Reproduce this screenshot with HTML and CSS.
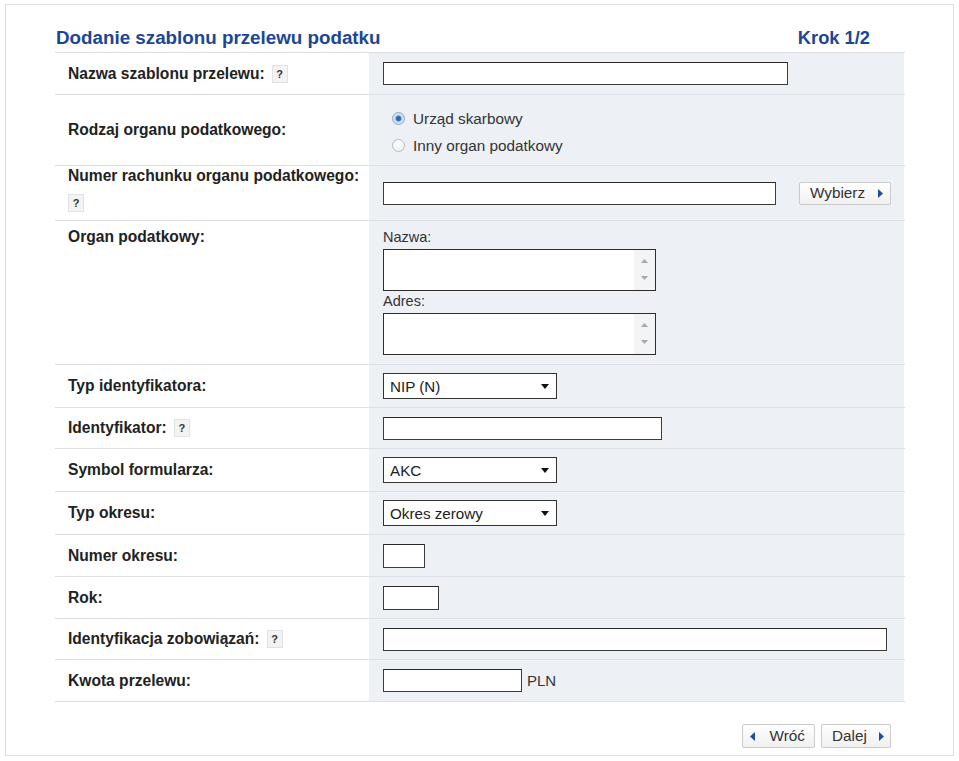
FILE: index.html
```html
<!DOCTYPE html>
<html lang="pl">
<head>
<meta charset="utf-8">
<title>Dodanie szablonu przelewu podatku</title>
<link rel="stylesheet" href="styles.css">
</head>
<body>
<div class="panel">
  <div class="head">
    <h1 class="title">Dodanie szablonu przelewu podatku</h1>
    <span class="step">Krok 1/2</span>
  </div>

  <div class="form">
    <div class="row h41">
      <div class="lbl">Nazwa szablonu przelewu:<span class="help">?</span></div>
      <div class="val"><input class="txt w405" type="text"></div>
    </div>

    <div class="row h70">
      <div class="lbl">Rodzaj organu podatkowego:</div>
      <div class="val radios">
        <label class="radio"><span class="dot on"></span>Urząd skarbowy</label>
        <label class="radio"><span class="dot"></span>Inny organ podatkowy</label>
      </div>
    </div>

    <div class="row h54">
      <div class="lbl col">Numer rachunku organu podatkowego:<span class="help down">?</span></div>
      <div class="val"><input class="txt w393" type="text">
        <button class="btn pick" type="button">Wybierz<svg width="5" height="9" viewBox="0 0 5 9"><path d="M0 0L5 4.5L0 9Z" fill="#1d4f9f"/></svg></button>
      </div>
    </div>

    <div class="row h143">
      <div class="lbl top">Organ podatkowy:</div>
      <div class="val stack">
        <div class="sub">Nazwa:</div>
        <div class="tbox">
          <textarea class="ta"></textarea>
          <div class="sb"><svg width="7" height="4" viewBox="0 0 7 4"><path d="M0 4L3.5 0L7 4Z" fill="#a8a8a8"/></svg><svg width="7" height="4" viewBox="0 0 7 4"><path d="M0 0L3.5 4L7 0Z" fill="#a8a8a8"/></svg></div>
        </div>
        <div class="sub">Adres:</div>
        <div class="tbox">
          <textarea class="ta"></textarea>
          <div class="sb"><svg width="7" height="4" viewBox="0 0 7 4"><path d="M0 4L3.5 0L7 4Z" fill="#a8a8a8"/></svg><svg width="7" height="4" viewBox="0 0 7 4"><path d="M0 0L3.5 4L7 0Z" fill="#a8a8a8"/></svg></div>
        </div>
      </div>
    </div>

    <div class="row h42">
      <div class="lbl">Typ identyfikatora:</div>
      <div class="val"><div class="sel"><select><option>NIP (N)</option></select><svg class="arr" width="8" height="5" viewBox="0 0 8 5"><path d="M0 0L8 0L4 5Z" fill="#111"/></svg></div></div>
    </div>

    <div class="row h40">
      <div class="lbl">Identyfikator:<span class="help">?</span></div>
      <div class="val"><input class="txt w279" type="text"></div>
    </div>

    <div class="row h42">
      <div class="lbl">Symbol formularza:</div>
      <div class="val"><div class="sel"><select><option>AKC</option></select><svg class="arr" width="8" height="5" viewBox="0 0 8 5"><path d="M0 0L8 0L4 5Z" fill="#111"/></svg></div></div>
    </div>

    <div class="row h42">
      <div class="lbl">Typ okresu:</div>
      <div class="val"><div class="sel"><select><option>Okres zerowy</option></select><svg class="arr" width="8" height="5" viewBox="0 0 8 5"><path d="M0 0L8 0L4 5Z" fill="#111"/></svg></div></div>
    </div>

    <div class="row h41">
      <div class="lbl">Numer okresu:</div>
      <div class="val"><input class="txt w42 tall" type="text"></div>
    </div>

    <div class="row h41">
      <div class="lbl">Rok:</div>
      <div class="val"><input class="txt w56 tall" type="text"></div>
    </div>

    <div class="row h40">
      <div class="lbl">Identyfikacja zobowiązań:<span class="help">?</span></div>
      <div class="val"><input class="txt w504" type="text"></div>
    </div>

    <div class="row h41">
      <div class="lbl">Kwota przelewu:</div>
      <div class="val"><input class="txt w139" type="text"><span class="cur">PLN</span></div>
    </div>
  </div>

  <div class="foot">
    <button class="btn back" type="button"><svg width="5" height="9" viewBox="0 0 5 9"><path d="M5 0L0 4.5L5 9Z" fill="#1d4f9f"/></svg>Wróć</button>
    <button class="btn next" type="button">Dalej<svg width="5" height="9" viewBox="0 0 5 9"><path d="M0 0L5 4.5L0 9Z" fill="#1d4f9f"/></svg></button>
  </div>
</div>
</body>
</html>
```

FILE: styles.css
```css
* { box-sizing: border-box; }

body {
  margin: 0;
  padding: 4px 0 0 5px;
  background: #fff;
  font-family: "Liberation Sans", Arial, sans-serif;
  color: #333;
}

.panel {
  width: 949px;
  height: 752px;
  border: 1px solid #dedede;
  padding: 22px 48px 0 49px;
}

.head {
  display: flex;
  justify-content: space-between;
  align-items: baseline;
  padding: 0 35px 3px 1px;
  border-bottom: 1px solid #dcdfe3;
}

.title {
  margin: 0;
  font-size: 18.8px;
  line-height: 22px;
  font-weight: bold;
  color: #1c4695;
}

.step {
  font-size: 18.3px;
  line-height: 22px;
  font-weight: bold;
  color: #1c4695;
}

.row {
  display: grid;
  grid-template-columns: 314px 535px;
  border-bottom: 1px solid #dcdfe3;
}

.h40 { height: 41px; }
.h41 { height: 42px; }
.h42 { height: 43px; }
.h54 { height: 55px; }
.h70 { height: 71px; }
.h143 { height: 144px; }

.lbl {
  display: flex;
  align-items: center;
  padding-left: 13px;
  font-size: 15.6px;
  font-weight: bold;
  color: #222;
}

.lbl.col {
  flex-direction: column;
  align-items: flex-start;
  justify-content: flex-start;
  line-height: 20px;
  padding-top: 0;
}

.lbl.top {
  align-items: flex-start;
  padding-top: 6px;
  line-height: 20px;
}

.help {
  display: inline-flex;
  align-items: center;
  justify-content: center;
  width: 16px;
  height: 18px;
  margin-left: 7px;
  background: #f3f3f3;
  border: 1px solid #e2e2e2;
  font-size: 11px;
  font-weight: bold;
  color: #333;
}

.help.down {
  margin: 8px 0 0 0;
}

.val {
  display: flex;
  align-items: center;
  padding-left: 14px;
  background: #edf1f6;
}

.txt {
  height: 23px;
  border: 1px solid #3c3c3c;
  border-top-color: #2a2a2a;
  background: #fff;
  font: 15px "Liberation Sans", Arial, sans-serif;
  padding: 0 4px;
  margin: 0;
  outline: none;
}

.tall { height: 24px; }

.w405 { width: 405px; }
.w393 { width: 393px; }
.w279 { width: 279px; }
.w42 { width: 42px; }
.w56 { width: 56px; }
.w504 { width: 504px; }
.w139 { width: 139px; }

.cur {
  margin-left: 5px;
  font-size: 15px;
  color: #333;
}

.radios {
  flex-direction: column;
  align-items: flex-start;
  padding-top: 10px;
  padding-left: 23px;
  justify-content: flex-start;
}

.radio {
  display: flex;
  align-items: center;
  height: 27px;
  font-size: 15.3px;
  color: #333;
}

.dot {
  width: 13px;
  height: 13px;
  border-radius: 50%;
  border: 1px solid #b9bcc1;
  background: radial-gradient(circle at 50% 35%, #ffffff 0%, #e9ebee 100%);
  margin-right: 8px;
  position: relative;
}

.dot.on {
  border-color: #8ea5c0;
  background: radial-gradient(circle, #1f5fa6 0%, #3a7bc0 30%, #c9dbef 45%, #eef3f9 100%);
}

.btn {
  display: inline-flex;
  align-items: center;
  justify-content: space-between;
  height: 24px;
  border: 1px solid #cbcbcb;
  border-radius: 2px;
  background: linear-gradient(#ffffff, #f0f0f0);
  font: 15.3px "Liberation Sans", Arial, sans-serif;
  color: #333;
  cursor: pointer;
  margin: 0;
}

.pick {
  width: 92px;
  height: 23px;
  margin-left: 23px;
  padding: 0 7px 0 10px;
}

.stack {
  flex-direction: column;
  align-items: flex-start;
  justify-content: flex-start;
  padding-top: 7px;
}

.sub {
  font-size: 14.5px;
  line-height: 19px;
  color: #333;
}

.tbox {
  display: flex;
  width: 273px;
  height: 42px;
  margin: 2px 0 1px;
  border: 1px solid #2e2e2e;
  background: #fff;
}

.ta {
  flex: 1;
  border: 0;
  resize: none;
  outline: none;
  background: #fff;
  margin: 0;
  padding: 2px 4px;
  font: 14px "Liberation Sans", Arial, sans-serif;
}

.sb {
  width: 21px;
  display: flex;
  flex-direction: column;
  align-items: center;
  justify-content: space-between;
  padding: 9px 0 10px;
  background: #f3f4f5;
}

.sel {
  position: relative;
  width: 174px;
  height: 26px;
}

.sel select {
  appearance: none;
  -webkit-appearance: none;
  width: 100%;
  height: 100%;
  border: 1px solid #333;
  border-radius: 0;
  background: #fff;
  padding: 0 20px 0 6px;
  font: 15.2px "Liberation Sans", Arial, sans-serif;
  color: #222;
  outline: none;
}

.arr {
  position: absolute;
  right: 8px;
  top: 11px;
  pointer-events: none;
}

.foot {
  display: flex;
  justify-content: flex-end;
  gap: 6px;
  padding: 22px 14px 0 0;
}

.back {
  width: 73px;
  padding: 0 9px 0 7px;
}

.next {
  width: 70px;
  padding: 0 6px 0 10px;
}
```
